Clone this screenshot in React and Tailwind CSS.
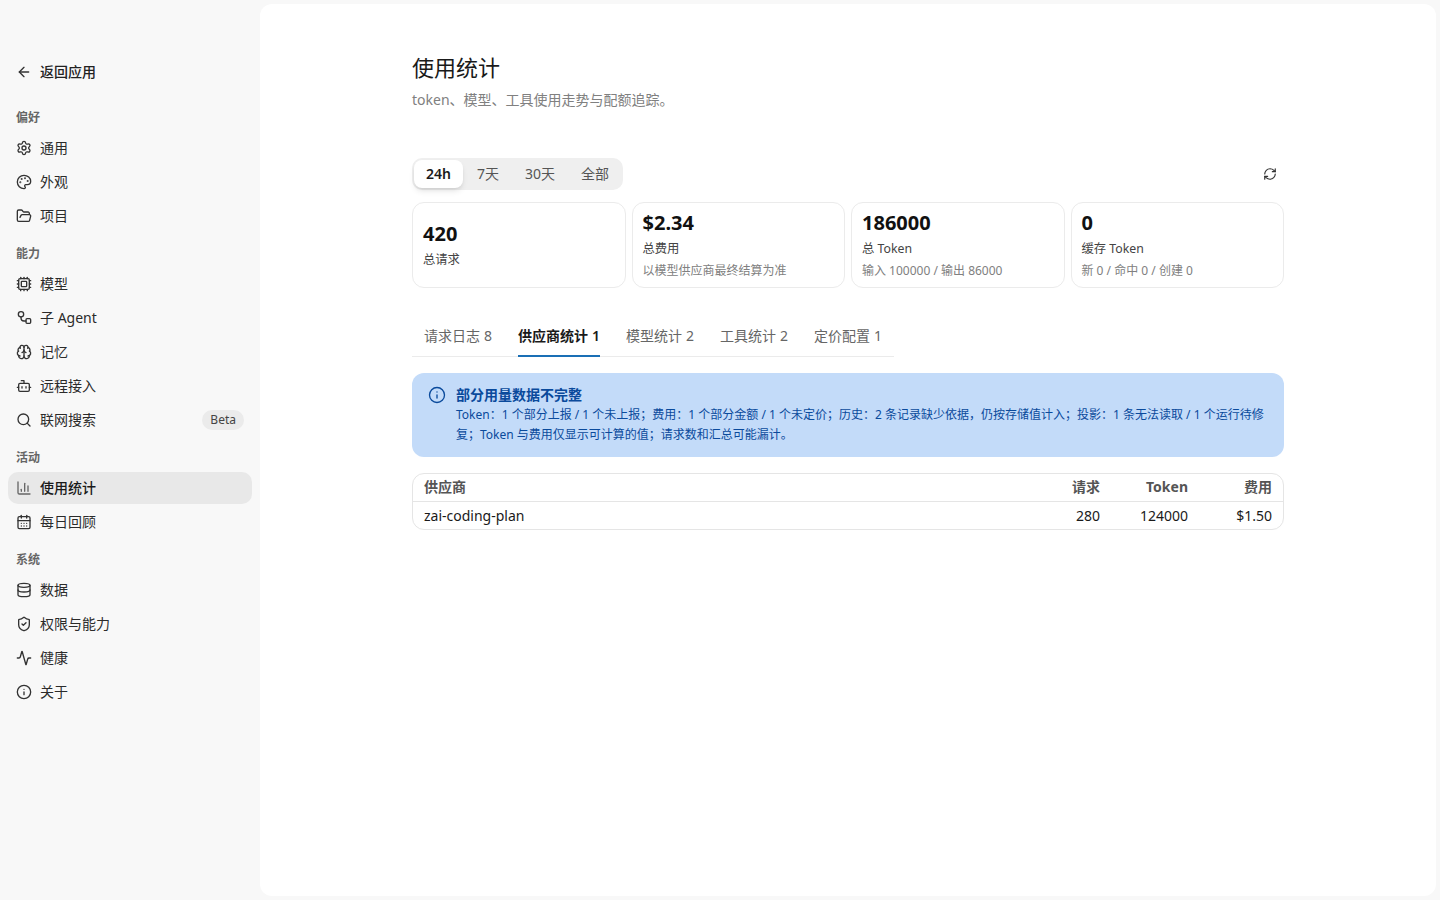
import React from "react";
import { ArrowLeft, Settings, Palette, FolderOpen, Cpu, Brain, Bot, Search, ChartColumn, CalendarDays, Database, ShieldCheck, Activity, Info, RefreshCw } from "lucide-react";

const font = "font-['Noto_Sans','Noto_Sans_CJK_SC',sans-serif]";

const SubAgent = (p) => (
  <svg {...p} viewBox="0 0 24 24" fill="none" stroke="currentColor" strokeWidth="2" strokeLinecap="round" strokeLinejoin="round">
    <circle cx="7.5" cy="6.5" r="4" />
    <rect x="15" y="13" width="7" height="7" rx="1.5" />
    <path d="M7.5 10.5v1.5a4.5 4.5 0 0 0 4.5 4.5h3" />
  </svg>
);

const groups = [
  { label: "偏好", items: [["通用", Settings], ["外观", Palette], ["项目", FolderOpen]] },
  { label: "能力", items: [["模型", Cpu], ["子 Agent", SubAgent], ["记忆", Brain], ["远程接入", Bot], ["联网搜索", Search, "Beta"]] },
  { label: "活动", items: [["使用统计", ChartColumn, null, true], ["每日回顾", CalendarDays]] },
  { label: "系统", items: [["数据", Database], ["权限与能力", ShieldCheck], ["健康", Activity], ["关于", Info]] },
];

function NavRow({ text, Icon, badge, active }) {
  return (
    <div className={`flex h-8 items-center gap-2 rounded-[10px] px-2 text-sm ${active ? "bg-[#e8e8e8] font-medium text-[#1a1a1a]" : "text-[#2b2b2b]"}`}>
      <Icon className={`h-4 w-4 shrink-0 ${active ? "text-[#666666]" : "text-[#333333]"}`} strokeWidth={2} />
      <span className="flex-1 leading-8">{text}</span>
      {badge && <span className="rounded-full bg-[#ebebeb] px-2 py-0.5 text-xs leading-4 text-[#444444]">{badge}</span>}
    </div>
  );
}

function Card({ value, label, sub }) {
  return (
    <div className="flex h-[86px] flex-col justify-center rounded-xl border border-[#ebebeb] bg-white px-2.5 pb-0.5">
      <div className="text-xl leading-7 font-bold text-[#111111]">{value}</div>
      <div className="mt-[3px] text-[12.3px] leading-[18px] text-[#444444]">{label}</div>
      {sub && <div className="mt-1 text-xs leading-[18px] text-[#808080]">{sub}</div>}
    </div>
  );
}

const tabs = [["请求日志", "8"], ["供应商统计", "1", true], ["模型统计", "2"], ["工具统计", "2"], ["定价配置", "1"]];

export default function App() {
  return (
    <div className={`flex h-screen w-full bg-[#f8f8f8] ${font}`}>
      <aside className="w-[260px] shrink-0 px-2 pt-14">
        <div className="flex h-8 items-center gap-2 px-2 text-sm font-medium text-[#222222]">
          <ArrowLeft className="h-4 w-4 text-[#333333]" strokeWidth={2} />
          返回应用
        </div>
        <div className="mt-[21px]">
          {groups.map((g) => (
            <div key={g.label} className="mb-[13px]">
              <div className="mb-[5px] px-2 text-xs leading-[18px] font-semibold text-[#666666]">{g.label}</div>
              <div className="flex flex-col gap-0.5">
                {g.items.map(([text, Icon, badge, active]) => (
                  <NavRow key={text} text={text} Icon={Icon} badge={badge} active={active} />
                ))}
              </div>
            </div>
          ))}
        </div>
      </aside>

      <main className="my-1 mr-1 flex-1 rounded-xl bg-white">
        <div className="mx-auto w-[872px] pt-[45px]">
          <h1 className="text-[22px] leading-9 font-normal text-[#1a1a1a]">使用统计</h1>
          <p className="mt-1 text-sm leading-[21px] text-[#808080]">token、模型、工具使用走势与配额追踪。</p>

          <div className="mt-12 flex items-center justify-between">
            <div className="flex h-8 items-center rounded-[10px] bg-[#efefef] p-0.5 text-sm text-[#555555]">
              <div className="flex h-7 w-[49px] items-center justify-center rounded-lg bg-white font-semibold text-[#1a1a1a] shadow-md">24h</div>
              <div className="flex h-7 w-[50px] items-center justify-center">7天</div>
              <div className="flex h-7 w-[54px] items-center justify-center">30天</div>
              <div className="flex h-7 w-[54px] items-center justify-center pl-0.5">全部</div>
            </div>
            <div className="flex h-7 w-7 items-center justify-center text-[#333333]">
              <RefreshCw className="h-3.5 w-3.5" strokeWidth={2} />
            </div>
          </div>

          <div className="mt-3 grid grid-cols-4 gap-1.5">
            <Card value="420" label="总请求" />
            <Card value="$2.34" label="总费用" sub="以模型供应商最终结算为准" />
            <Card value="186000" label="总 Token" sub="输入 100000 / 输出 86000" />
            <Card value="0" label="缓存 Token" sub="新 0 / 命中 0 / 创建 0" />
          </div>

          <div className="mt-5 flex w-[482px] gap-[26px] border-b border-[#ebebeb] px-3 text-sm whitespace-nowrap">
            {tabs.map(([t, n, active]) => (
              <div key={t} className={`-mb-px flex h-[49px] shrink-0 items-center gap-1 border-b-2 pt-[9px] ${active ? "border-[#1a6fb5] font-semibold text-[#1a1a1a]" : "border-transparent text-[#666666]"}`}>
                <span>{t}</span>
                <span>{n}</span>
              </div>
            ))}
          </div>

          <div className="mt-4 flex h-[84px] gap-2.5 rounded-xl bg-[#c3dbf9] px-4 pt-3">
            <Info className="mt-px h-[18px] w-[18px] shrink-0 text-[#0a4a9c]" strokeWidth={1.8} />
            <div className="min-w-0 text-[#0a4a9c]">
              <div className="text-sm leading-5 font-semibold">部分用量数据不完整</div>
              <div className="text-xs leading-5">Token：1 个部分上报 / 1 个未上报；费用：1 个部分金额 / 1 个未定价；历史：2 条记录缺少依据，仍按存储值计入；投影：1 条无法读取 / 1 个运行待修复；Token 与费用仅显示可计算的值；请求数和汇总可能漏计。</div>
            </div>
          </div>

          <div className="mt-4 rounded-xl border border-[#e5e5e5] text-sm">
            <div className="flex h-7 items-center border-b border-[#e5e5e5] px-[11px] pb-0.5 font-bold text-[#555555]">
              <span className="flex-1">供应商</span>
              <span className="w-16 text-right">请求</span>
              <span className="w-[88px] text-right">Token</span>
              <span className="w-[84px] text-right">费用</span>
            </div>
            <div className="flex h-[27px] items-center px-[11px] text-[#1a1a1a]">
              <span className="flex-1">zai-coding-plan</span>
              <span className="w-16 text-right">280</span>
              <span className="w-[88px] text-right">124000</span>
              <span className="w-[84px] text-right">$1.50</span>
            </div>
          </div>
        </div>
      </main>
    </div>
  );
}
